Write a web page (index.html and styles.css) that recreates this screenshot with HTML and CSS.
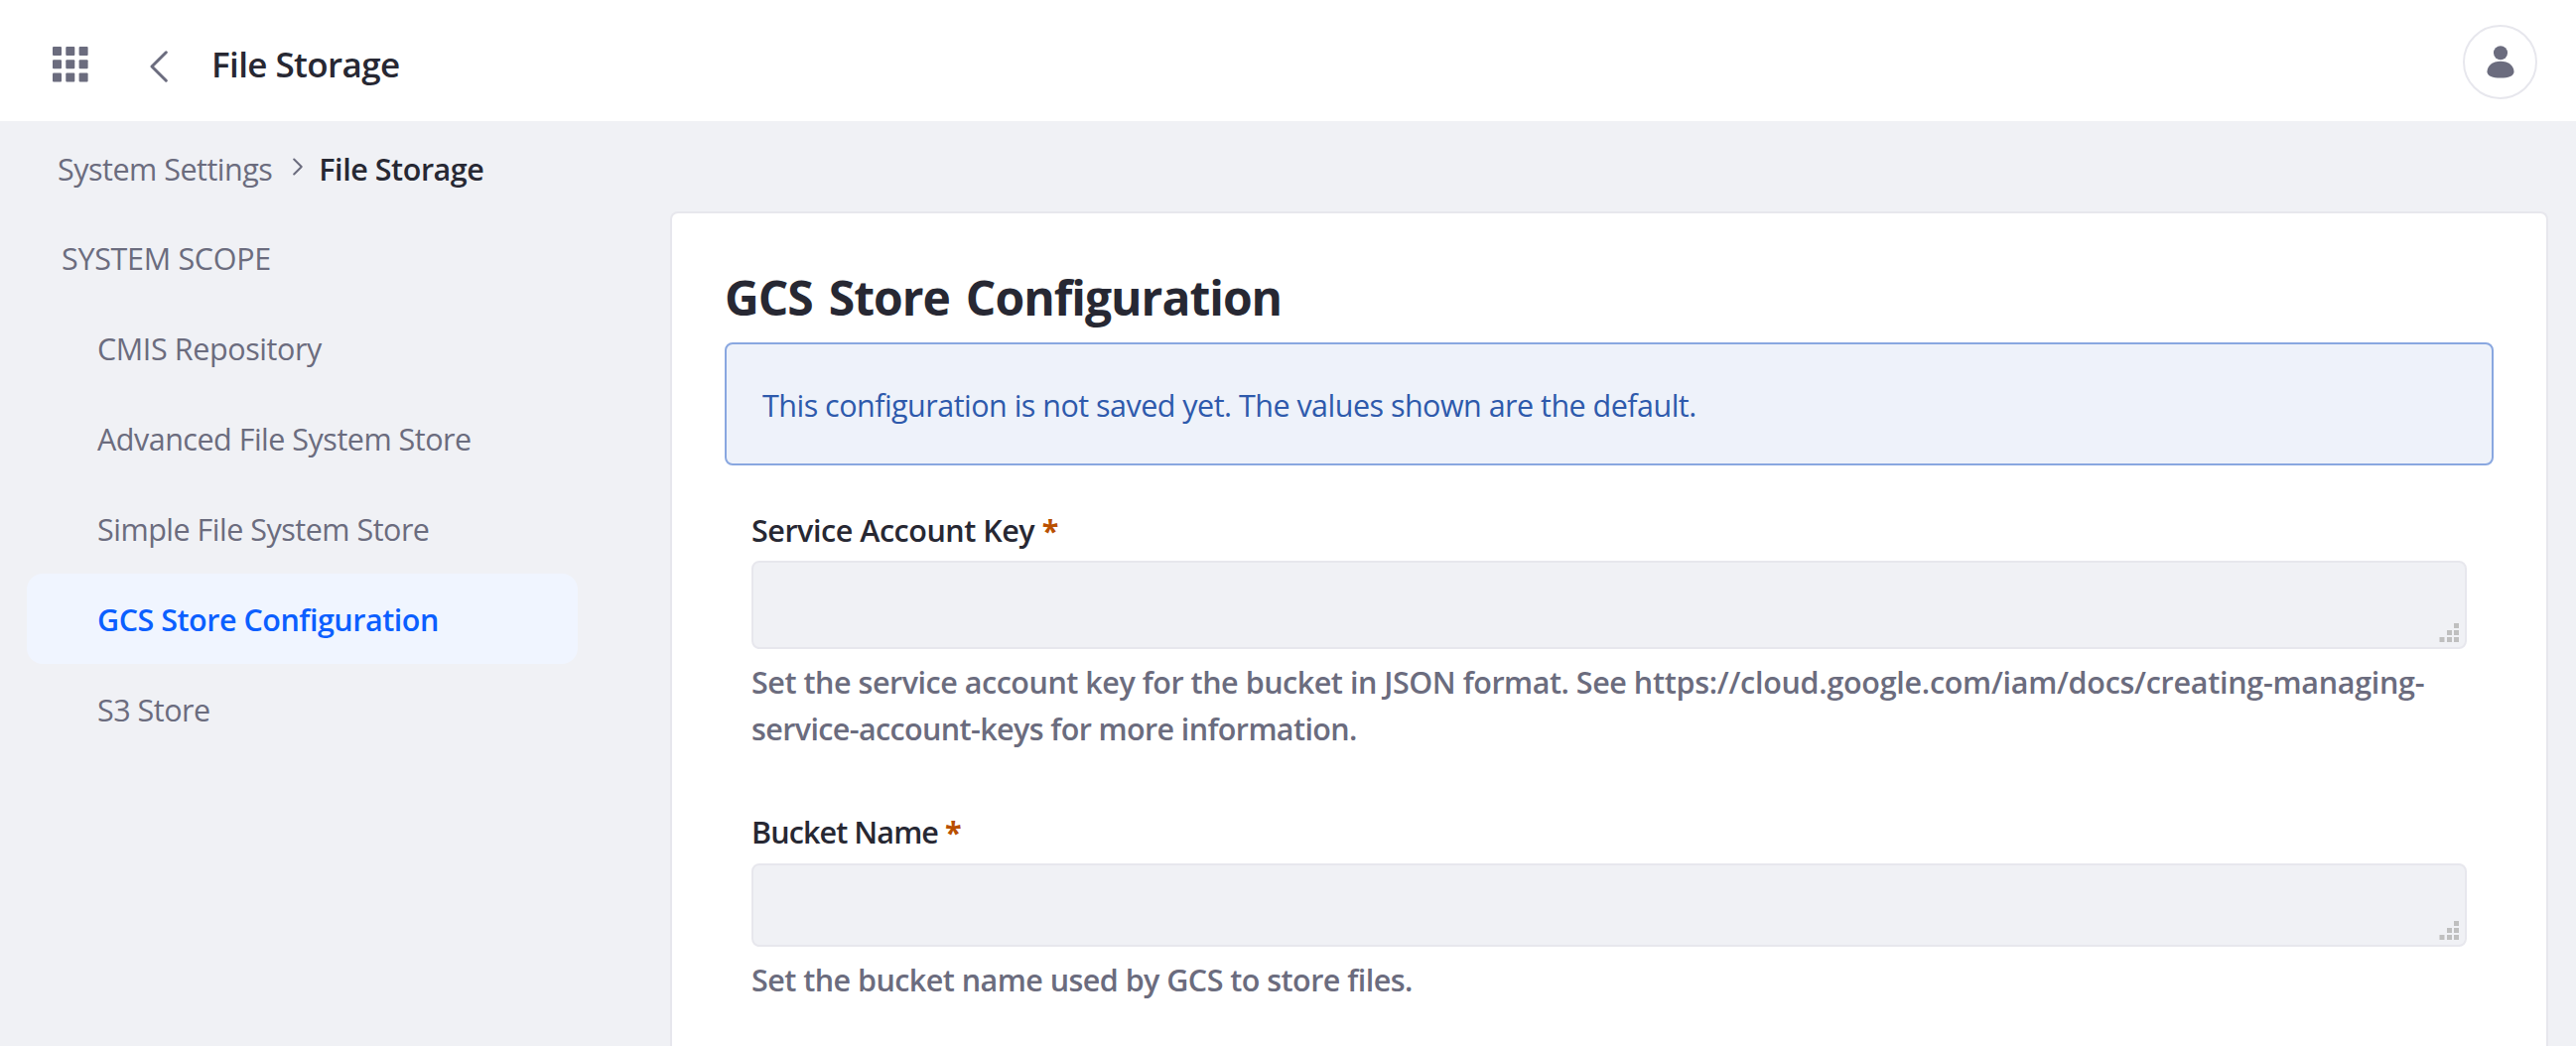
FILE: index.html
```html
<!DOCTYPE html>
<html lang="en">
<head>
  <meta charset="utf-8">
  <title>File Storage</title>
  <link rel="stylesheet" href="styles.css">
</head>
<body>
  <header class="topbar">
    <svg class="apps-icon" width="36" height="36" viewBox="0 0 36 36" fill="#6b6c7e" aria-hidden="true">
      <rect x="0" y="0" width="9" height="9" rx="1"/><rect x="13.3" y="0" width="9" height="9" rx="1"/><rect x="26.6" y="0" width="9" height="9" rx="1"/>
      <rect x="0" y="13.3" width="9" height="9" rx="1"/><rect x="13.3" y="13.3" width="9" height="9" rx="1"/><rect x="26.6" y="13.3" width="9" height="9" rx="1"/>
      <rect x="0" y="26.6" width="9" height="9" rx="1"/><rect x="13.3" y="26.6" width="9" height="9" rx="1"/><rect x="26.6" y="26.6" width="9" height="9" rx="1"/>
    </svg>
    <svg class="back-icon" width="18" height="32" viewBox="0 0 18 32" fill="none" stroke="#6b6c7e" stroke-width="3" stroke-linecap="round" stroke-linejoin="round" aria-hidden="true">
      <path d="M16.3 1.8 2 16l14.3 14.2"/>
    </svg>
    <h1 class="title">File Storage</h1>
    <div class="avatar">
      <svg width="28" height="33" viewBox="0 0 28 33" fill="#6b6c7e" aria-hidden="true">
        <circle cx="14" cy="7.2" r="7"/>
        <path d="M14 15.7c8.3 0 13.5 4.8 13.5 10.5 0 4.3-5.4 6.3-13.5 6.3S.5 30.5.5 26.2C.5 20.5 5.7 15.7 14 15.7z"/>
      </svg>
    </div>
  </header>

  <nav class="breadcrumb">
    <a class="crumb">System Settings</a>
    <svg class="crumb-icon" width="10" height="18" viewBox="0 0 10 18" fill="none" stroke="#6b6c7e" stroke-width="2" stroke-linecap="round" stroke-linejoin="round" aria-hidden="true">
      <path d="M1.2 1.5 8.7 9l-7.5 7.5"/>
    </svg>
    <span class="crumb-active">File Storage</span>
  </nav>

  <div class="layout">
    <aside class="sidebar">
      <div class="scope">SYSTEM SCOPE</div>
      <a class="item cmis">CMIS Repository</a>
      <a class="item">Advanced File System Store</a>
      <a class="item">Simple File System Store</a>
      <a class="item active">GCS Store Configuration</a>
      <a class="item">S3 Store</a>
    </aside>

    <main class="sheet">
      <h2 class="heading">GCS Store Configuration</h2>
      <div class="alert">This configuration is not saved yet. The values shown are the default.</div>

      <div class="field">
        <label class="label">Service Account Key <span class="required">*</span></label>
        <div class="input-wrap">
          <textarea class="input"></textarea>
          <svg class="grip" width="20" height="19" viewBox="0 0 20 19" fill="#bfbfbf" aria-hidden="true">
            <path d="M15 0h5v5h-5zM8 7h5v5H8zM15 7h5v5h-5zM.5 14h5v5h-5zM8 14h5v5H8zM15 14h5v5h-5z"/>
          </svg>
        </div>
        <p class="help"><span class="help-line help-intro">Set the service account key for the bucket in JSON format. See <span class="help-url">https://cloud.google.com/iam/docs/creating-managing-</span></span><span class="help-line help-rest">service-account-keys for more information.</span></p>
      </div>

      <div class="field">
        <label class="label label-bucket">Bucket Name <span class="required">*</span></label>
        <div class="input-wrap">
          <textarea class="input input-short"></textarea>
          <svg class="grip" width="20" height="19" viewBox="0 0 20 19" fill="#bfbfbf" aria-hidden="true">
            <path d="M15 0h5v5h-5zM8 7h5v5H8zM15 7h5v5h-5zM.5 14h5v5h-5zM8 14h5v5H8zM15 14h5v5h-5z"/>
          </svg>
        </div>
        <p class="help">Set the bucket name used by GCS to store files.</p>
      </div>
    </main>
  </div>
</body>
</html>
```
FILE: styles.css
```css
* {
  box-sizing: border-box;
}

body {
  margin: 0;
  height: 1054px;
  display: flex;
  flex-direction: column;
  overflow: hidden;
  background: #f0f1f5;
  color: #6b6c7e;
  font-family: "Open Sans", "Noto Sans", sans-serif;
  font-size: 30.5px;
  letter-spacing: -0.5px;
}

h1, h2, p {
  margin: 0;
}

svg {
  display: block;
  flex: none;
}

/* Top bar */
.topbar {
  flex: none;
  height: 122px;
  display: flex;
  align-items: center;
  padding: 3px 39px 0 53px;
  background: #fff;
}

.apps-icon {
  margin-right: 62px;
  margin-top: 5px;
}

.back-icon {
  margin-right: 44px;
  margin-top: 8px;
}

.title {
  padding-top: 3px;
  color: #272833;
  font-size: 35px;
  font-weight: 600;
  letter-spacing: -0.6px;
}

.avatar {
  width: 75px;
  height: 75px;
  margin: 0 0 0 auto;
  border: 2px solid #e7e7ed;
  border-radius: 50%;
  display: flex;
  align-items: center;
  justify-content: center;
}

/* Breadcrumb */
.breadcrumb {
  flex: none;
  height: 91px;
  display: flex;
  align-items: center;
  padding: 5px 58px 0;
  line-height: 44px;
}

.breadcrumb .crumb-icon {
  margin: 0 16px 5px 21px;
}

.crumb-active {
  color: #272833;
  font-weight: 600;
  letter-spacing: -0.45px;
}

/* Columns */
.layout {
  flex: 1;
  display: flex;
  justify-content: space-between;
  padding: 0 28px 0 27px;
}

.sidebar {
  width: 555px;
  padding-top: 1px;
  line-height: 89px;
}

.scope {
  padding: 2px 0 0 35px;
  letter-spacing: -0.31px;
}

.item {
  display: block;
  padding: 2px 0 0 71px;
  border-radius: 16px;
}

.cmis {
  letter-spacing: -0.4px;
}

.item.active {
  background: #f0f5ff;
  color: #0b5fff;
  font-weight: 600;
  letter-spacing: -0.48px;
}

/* Sheet */
.sheet {
  width: 1892px;
  padding: 55px 53px 0;
  background: #fff;
  border: 2px solid #e7e7ed;
  border-bottom: 0;
  border-radius: 8px 8px 0 0;
}

.heading {
  margin-bottom: 15px;
  color: #272833;
  font-size: 48px;
  line-height: 60px;
  letter-spacing: -1px;
  word-spacing: 4.5px;
}

.alert {
  height: 124px;
  margin-bottom: 42px;
  padding: 2px 36px 0;
  background: #eef2fa;
  border: 2px solid #89a7e0;
  border-radius: 8px;
  color: #2e5aac;
  line-height: 118px;
  letter-spacing: -0.52px;
}

.field {
  margin-bottom: 57px;
  padding: 0 27px;
  font-weight: 600;
  line-height: 47px;
}

.label {
  display: block;
  margin-bottom: 7px;
  color: #272833;
  letter-spacing: -0.47px;
}

.label-bucket {
  margin-bottom: 8px;
  letter-spacing: -0.9px;
}

.required {
  color: #b95000;
  font-weight: 700;
}

.input-wrap {
  position: relative;
  margin-bottom: 10px;
}

.input {
  display: block;
  width: 100%;
  height: 89px;
  background: #f0f1f5;
  border: 2px solid #e7e7ed;
  border-radius: 8px;
  resize: none;
}

.input-short {
  height: 84px;
}

.grip {
  position: absolute;
  right: 8px;
  bottom: 7px;
}

.help {
  letter-spacing: -0.54px;
}

.help-line {
  display: block;
  white-space: nowrap;
}

.help-intro {
  letter-spacing: -0.47px;
}

.help-url {
  letter-spacing: -0.28px;
}

.help-rest {
  letter-spacing: -0.62px;
}
```
